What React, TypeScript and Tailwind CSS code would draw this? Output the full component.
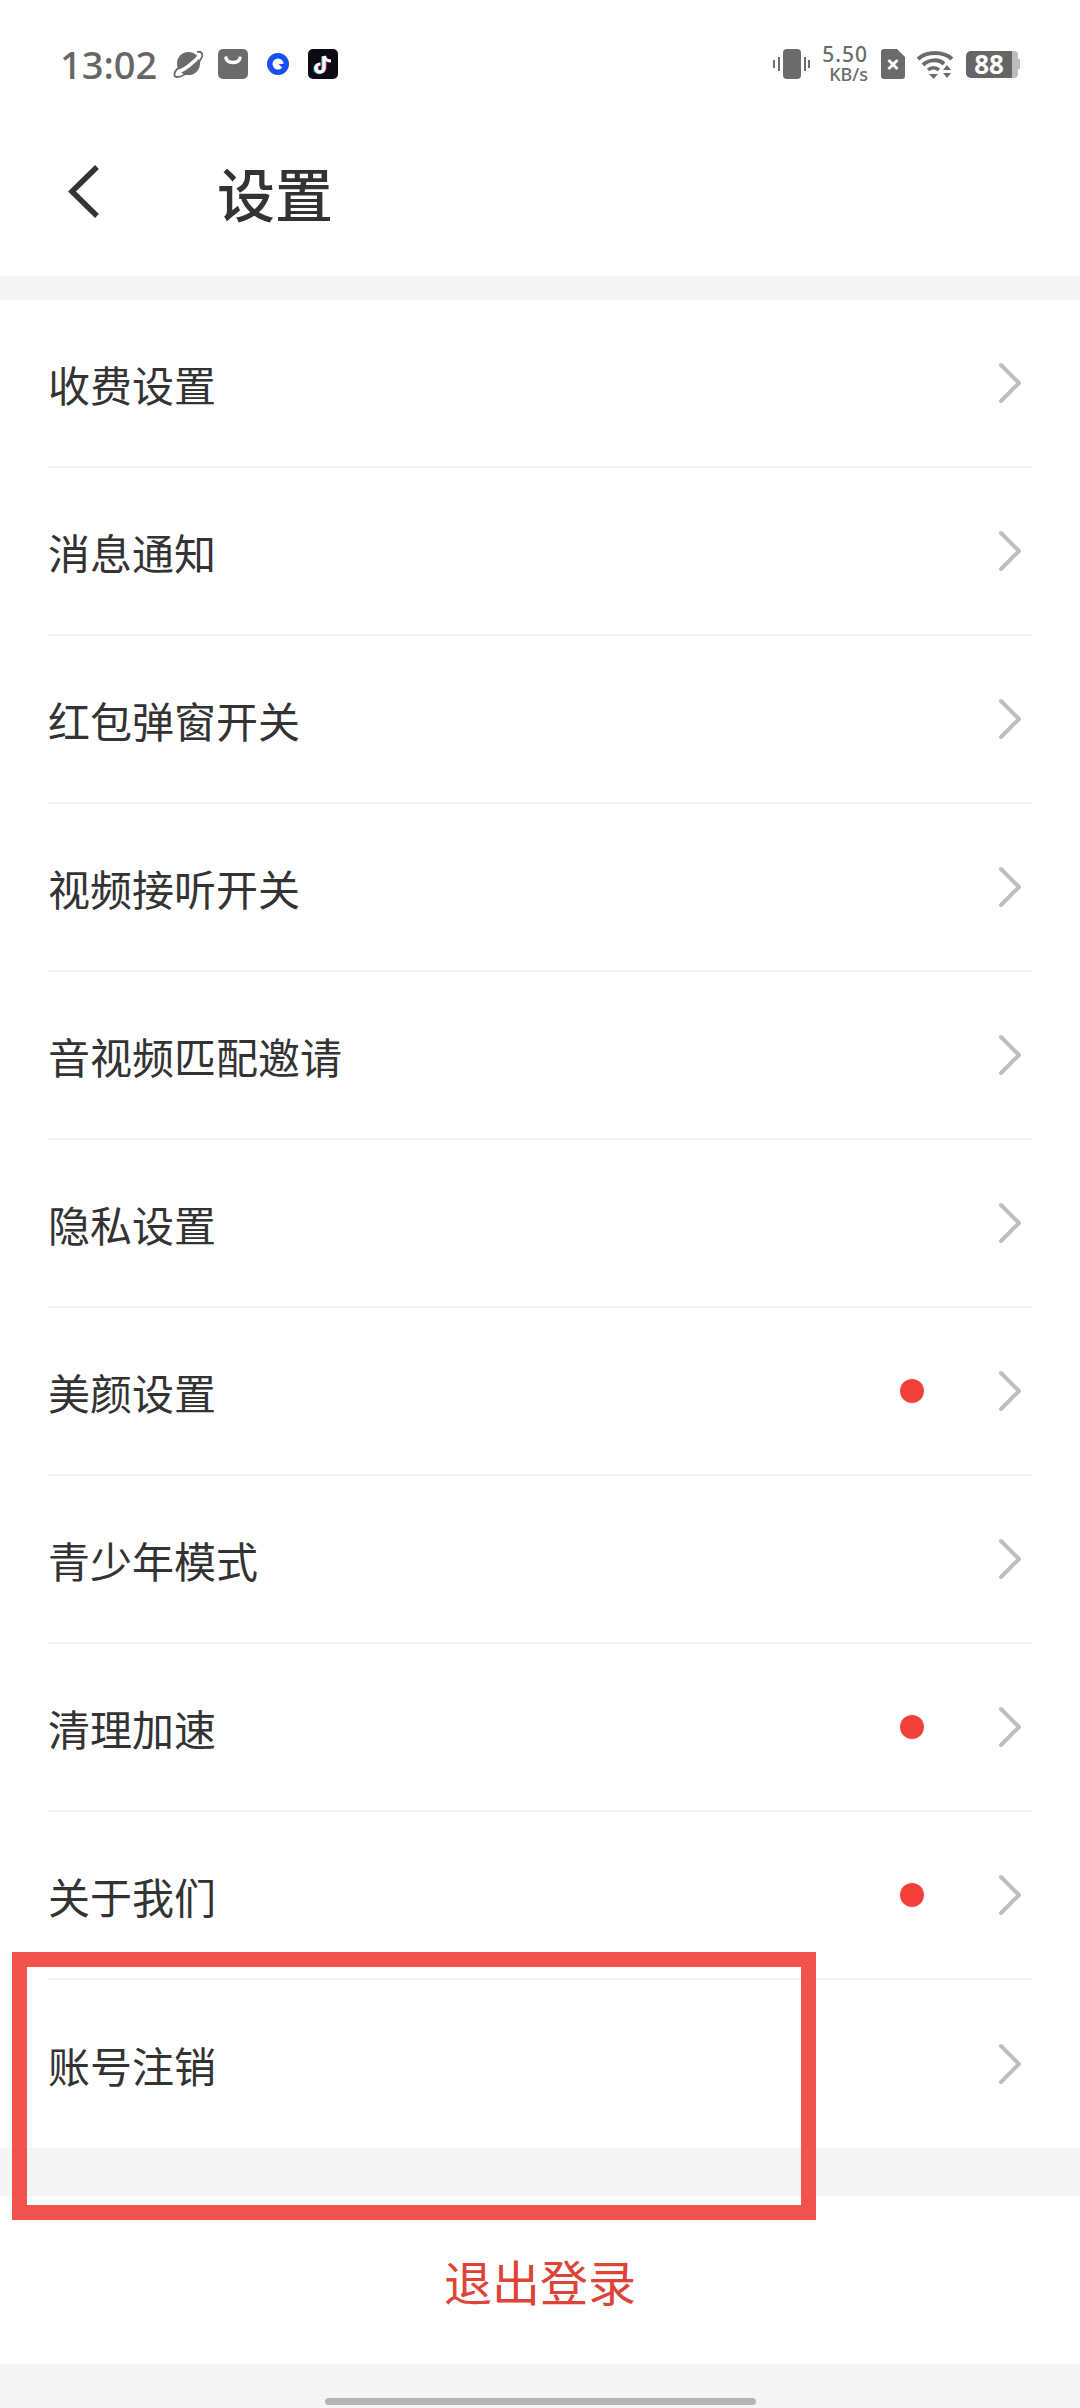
import { ReactNode } from "react";

const rows = [
  { title: "收费设置" },
  { title: "消息通知" },
  { title: "红包弹窗开关" },
  { title: "视频接听开关" },
  { title: "音视频匹配邀请" },
  { title: "隐私设置" },
  { title: "美颜设置", dot: true },
  { title: "青少年模式" },
  { title: "清理加速", dot: true },
  { title: "关于我们", dot: true },
  { title: "账号注销", last: true },
];

function Chevron() {
  return (
    <svg width="24" height="42" viewBox="0 0 24 42" fill="none">
      <path d="M3 3 L21 21 L3 39" stroke="#bfbfbf" strokeWidth="4" strokeLinecap="round" strokeLinejoin="round" />
    </svg>
  );
}

function Row({ title, dot, last }: { title: string; dot?: boolean; last?: boolean }) {
  return (
    <div className={`h-[168px] flex items-center justify-between ${last ? "" : "border-b-2 border-[#f0f0f0]"}`}>
      <span className="text-[42px] text-[#333333] leading-none pt-[1px]">{title}</span>
      <div className="flex items-center">
        {dot && <span className="w-6 h-6 rounded-full bg-[#f2413a] mr-[74px]" />}
        <span className="mr-[10px] flex"><Chevron /></span>
      </div>
    </div>
  );
}

function StatusIcon({ className, children }: { className?: string; children: ReactNode }) {
  return <div className={`flex shrink-0 ${className ?? ""}`}>{children}</div>;
}

function StatusBar() {
  return (
    <div className="h-[126px] pl-[60px] pr-[60px] pt-[46px] flex justify-between items-start">
      <div className="flex items-center h-[36px]">
        <span className="text-[38px] font-medium text-[#666666] leading-none font-['Noto_Sans'] mr-[16px]">13:02</span>
        <StatusIcon className="mr-[15px]">
          <svg width="30" height="28" viewBox="0 0 30 28">
            <circle cx="15.5" cy="13.5" r="11.5" fill="#6b6b6b" />
            <path d="M2 23 C10 21 21 13 29 3" stroke="#ffffff" strokeWidth="3.5" fill="none" />
            <path d="M5 18 C1 22 0 27 4 27 C11 27 25 16 29 7 C30 3 28 1 24 2" stroke="#6b6b6b" strokeWidth="1.8" fill="none" />
          </svg>
        </StatusIcon>
        <StatusIcon className="mr-[19px]">
          <svg width="30" height="30" viewBox="0 0 30 30">
            <rect width="30" height="30" rx="5" fill="#6b6b6b" />
            <path d="M8 9 C9 15 21 15 22 9" stroke="#fff" strokeWidth="3.5" fill="none" strokeLinecap="round" />
          </svg>
        </StatusIcon>
        <StatusIcon className="mr-[19px]">
          <svg width="22" height="22" viewBox="0 0 22 22">
            <circle cx="11" cy="11" r="11" fill="#1650f0" />
            <circle cx="11" cy="11" r="5.5" fill="#fff" />
            <path d="M11.5 11 L17 11 L17 16 Z" fill="#1650f0" />
          </svg>
        </StatusIcon>
        <StatusIcon>
          <svg width="30" height="30" viewBox="0 0 30 30">
            <rect width="30" height="30" rx="5" fill="#0c0a14" />
            <path d="M16 7 V19 A4 4 0 1 1 12 15" stroke="#45d6d8" strokeWidth="3.2" fill="none" transform="translate(-1 0.6)" />
            <path d="M16 7 V19 A4 4 0 1 1 12 15" stroke="#f0416a" strokeWidth="3.2" fill="none" transform="translate(1 0)" />
            <path d="M16 7 V19 A4 4 0 1 1 12 15" stroke="#ffffff" strokeWidth="3.2" fill="none" />
            <path d="M16 7 C17 10 19 12 23 12" stroke="#ffffff" strokeWidth="3" fill="none" />
          </svg>
        </StatusIcon>
      </div>
      <div className="flex items-center h-[36px]">
        <StatusIcon className="mr-[11px]">
          <svg width="37" height="30" viewBox="0 0 37 30">
            <rect x="10" y="0" width="18" height="30" rx="4" fill="#6b6b6b" />
            <rect x="5" y="8" width="2" height="14" fill="#6b6b6b" />
            <rect x="0" y="11" width="2" height="8" fill="#6b6b6b" />
            <rect x="31" y="8" width="2" height="14" fill="#6b6b6b" />
            <rect x="35" y="11" width="2" height="8" fill="#6b6b6b" />
          </svg>
        </StatusIcon>
        <div className="flex flex-col items-end w-[47px] mr-[13px] text-[#6b6b6b] font-['Noto_Sans'] font-medium">
          <span className="text-[21px] leading-[20px] tracking-[1px]">5.50</span>
          <span className="text-[18px] leading-[20px]">KB/s</span>
        </div>
        <StatusIcon className="mr-[12px]">
          <svg width="24" height="30" viewBox="0 0 24 30">
            <path d="M3 0 H16 L24 8 V27 A3 3 0 0 1 21 30 H3 A3 3 0 0 1 0 27 V3 A3 3 0 0 1 3 0 Z" fill="#6b6b6b" />
            <path d="M7.5 11 L16.5 20 M16.5 11 L7.5 20" stroke="#fff" strokeWidth="3" />
          </svg>
        </StatusIcon>
        <StatusIcon className="mr-[12px]">
          <svg width="37" height="29" viewBox="0 0 37 29">
            <path d="M1 9 C10 1 26 1 35 9" stroke="#6b6b6b" strokeWidth="4" fill="none" />
            <path d="M6 15 C12 9 22 9 27 14" stroke="#6b6b6b" strokeWidth="4" fill="none" />
            <path d="M11 20 C14 17 19 17 22 20" stroke="#6b6b6b" strokeWidth="3.5" fill="none" />
            <path d="M12 24 H21 L16.5 29 Z" fill="#6b6b6b" />
            <path d="M30 15 L34 20 H26 Z M26 23 H34 L30 28 Z" fill="#6b6b6b" />
          </svg>
        </StatusIcon>
        <div className="flex items-center">
          <div className="w-[46px] h-[27px] rounded-l-[5px] bg-[#666666] flex items-center justify-center text-white font-['Noto_Sans'] font-bold text-[26px] leading-none">88</div>
          <div className="w-[6px] h-[27px] rounded-r-[4px] bg-[#bdbdbd]" />
          <div className="w-[2px] h-[10px] bg-[#bdbdbd]" />
        </div>
      </div>
    </div>
  );
}

export default function App() {
  return (
    <div className="relative h-[2408px] w-[1080px] overflow-hidden bg-[#f5f5f5] font-['Noto_Sans_CJK_SC','Noto_Sans',sans-serif]">
      <div className="bg-white h-[276px]">
        <StatusBar />
        <div className="flex items-center h-[150px] -mt-[9px] pl-[66px]">
          <svg width="36" height="56" viewBox="0 0 36 56" fill="none">
            <path d="M31 3 L6 27.5 L31 52" stroke="#333333" strokeWidth="5.5" />
          </svg>
          <h1 className="ml-[115px] text-[58px] font-medium text-[#333333] leading-none">设置</h1>
        </div>
      </div>

      {/* Settings list */}
      <div className="mt-[24px] bg-white px-[48px]">
        {rows.map((row) => (
          <Row key={row.title} title={row.title} dot={row.dot} last={row.last} />
        ))}
      </div>

      <div className="mt-[48px] bg-white h-[168px] flex items-center justify-center">
        <span className="text-[48px] text-[#de4337] leading-none">退出登录</span>
      </div>

      {/* Home indicator */}
      <div className="mt-[34px] mx-auto w-[431px] h-[7px] rounded-full bg-[#b5b5b5]" />

      {/* Red annotation box */}
      <div className="absolute left-[12px] top-[1952px] w-[804px] h-[268px] border-[15px] border-[#f1544c]" />
    </div>
  );
}
